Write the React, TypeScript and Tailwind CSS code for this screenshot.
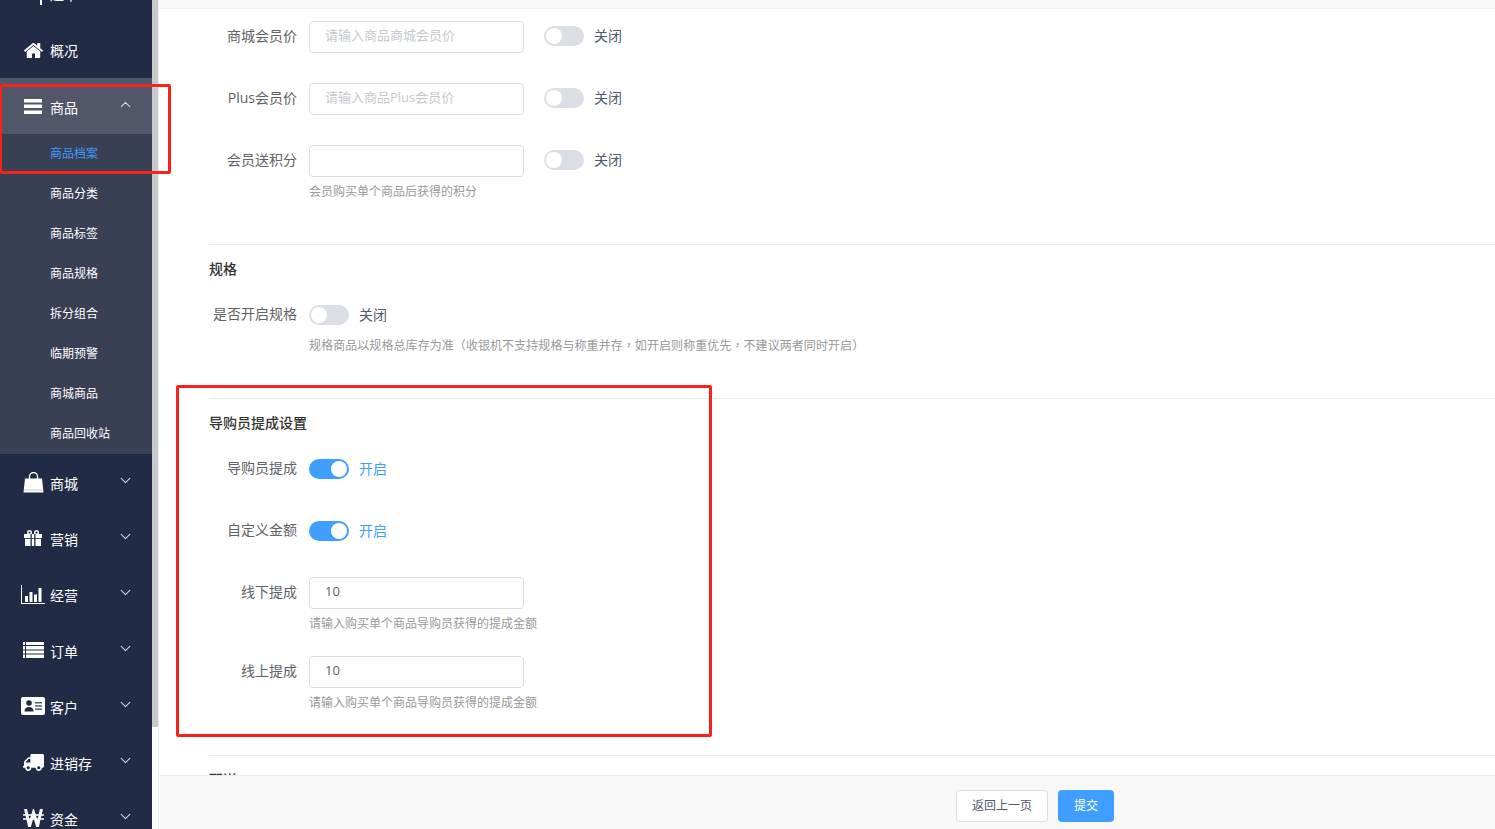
import { FaTruck } from "react-icons/fa";
import { ChevronDown, ChevronUp } from "lucide-react";
import type { ReactNode } from "react";

const font = "font-['Open_Sans','Noto_Sans_CJK_SC',sans-serif]";

const HomeIcon = () => (
  <svg width="21" height="21" viewBox="0 0 1792 1792" fill="currentColor">
    <path d="M1472 992v480q0 26-19 45t-45 19h-384v-384h-256v384h-384q-26 0-45-19t-19-45v-480q0-1 .5-3t.5-3l575-474 575 474q1 2 1 6zm223-69l-62 74q-8 9-21 11h-3q-13 0-21-7l-692-577-692 577q-12 8-24 7-13-2-21-11l-62-74q-8-10-7-23.500t11-21.500l719-599q32-26 76-26t76 26l244 204v-195q0-14 9-23t23-9h192q14 0 23 9t9 23v408l219 182q10 8 11 21.500t-7 23.500z" />
  </svg>
);

const BarsIcon = () => (
  <svg width="18" height="15" viewBox="0 0 18 15" fill="currentColor">
    <rect width="18" height="3.5" y="0" />
    <rect width="18" height="3.5" y="5.5" />
    <rect width="18" height="3.5" y="11.5" />
  </svg>
);

const BagIcon = () => (
  <svg width="21" height="21" viewBox="0 0 21 21" fill="none">
    <path d="M2 6.500h17l1.500 14H.5z" fill="currentColor" />
    <path d="M6.500 9V4.500a4 4 0 0 1 8 0V9" stroke="currentColor" strokeWidth="1.300" />
    <rect x="1" y="17.500" width="19" height="1" fill="#c9ccd4" />
  </svg>
);

const GiftIcon = () => (
  <svg width="18" height="16" viewBox="0 0 18 16" fill="none">
    <circle cx="5.500" cy="2.500" r="1.800" stroke="currentColor" strokeWidth="1.400" />
    <circle cx="12.500" cy="2.500" r="1.800" stroke="currentColor" strokeWidth="1.400" />
    <rect x="0" y="4" width="18" height="4" fill="currentColor" />
    <rect x="1" y="8.800" width="16" height="7.200" fill="currentColor" />
    <rect x="6.500" y="4" width="1.300" height="12" fill="#222b45" />
    <rect x="10.200" y="4" width="1.300" height="12" fill="#222b45" />
  </svg>
);

const ChartIcon = () => (
  <svg width="24" height="19" viewBox="0 0 24 19" fill="currentColor">
    <path d="M0 0h1v18h23v1H0z" />
    <rect x="4" y="11" width="3" height="6" />
    <rect x="8.500" y="7" width="3" height="10" />
    <rect x="13" y="9.500" width="3" height="7.500" />
    <rect x="17.500" y="3" width="3" height="14" />
  </svg>
);

const ListIcon = () => (
  <svg width="21" height="16" viewBox="0 0 21 16" fill="currentColor">
    <rect x="0" y="0" width="2" height="3" />
    <rect x="3" y="0" width="18" height="3" />
    <rect x="0" y="4" width="2" height="3.500" />
    <rect x="3" y="4" width="18" height="3.500" />
    <rect x="0" y="8.500" width="2" height="3" />
    <rect x="3" y="8.500" width="18" height="3" />
    <rect x="0" y="12.500" width="2" height="3.500" />
    <rect x="3" y="12.500" width="18" height="3.500" />
  </svg>
);

const CardIcon = () => (
  <svg width="24" height="18" viewBox="0 0 24 18">
    <rect width="24" height="18" rx="2" fill="currentColor" />
    <circle cx="8" cy="6" r="2.800" fill="#222b45" />
    <path d="M3.500 14.500c0-3 1.500-4.500 4.500-4.500s4.500 1.500 4.500 4.500z" fill="#222b45" />
    <rect x="14" y="5" width="7" height="1.500" fill="#555d70" />
    <rect x="14" y="8.200" width="7" height="1.500" fill="#555d70" />
    <rect x="14" y="11.400" width="7" height="1.500" fill="#555d70" />
  </svg>
);

const WonIcon = () => (
  <svg width="21" height="18" viewBox="0 0 21 18" fill="none" stroke="currentColor">
    <path d="M2.500 0l4 17 4-13.500 4 13.500 4-17" strokeWidth="3" />
    <path d="M0 6h21M0 10h21" strokeWidth="1.400" />
  </svg>
);

function NavItem({ icon, label, open }: { icon: ReactNode; label: string; open?: boolean }) {
  return (
    <div className={`flex h-14 shrink-0 items-center pl-[21px] pr-[18px] text-sm text-white ${open ? "bg-[#515669]" : ""}`}>
      <span className="flex w-6 shrink-0 justify-center text-white">{icon}</span>
      <span className="ml-[5px] flex-1 pt-[4px]">{label}</span>
      {open ? (
        <ChevronUp size={17} strokeWidth={1.5} className="mb-[3px] text-[#d5d7dd]" />
      ) : (
        <ChevronDown size={17} strokeWidth={1.5} className="mb-[3px] text-[#d5d7dd]" />
      )}
    </div>
  );
}

function SubItem({ label, active }: { label: string; active?: boolean }) {
  return (
    <div className={`flex h-10 shrink-0 items-center pl-[50px] text-xs ${active ? "text-[#3d9bff]" : "text-white"}`}>
      {label}
    </div>
  );
}

function Switch({ on }: { on?: boolean }) {
  return (
    <span className={`flex h-5 w-10 shrink-0 items-center rounded-full p-[2px] ${on ? "justify-end bg-[#409eff]" : "justify-start bg-[#dcdee6]"}`}>
      <span className="h-4 w-4 rounded-full bg-white" />
    </span>
  );
}

function SwitchText({ on }: { on?: boolean }) {
  return <span className={`ml-[10px] text-sm ${on ? "text-[#409eff]" : "text-[#515a6e]"}`}>{on ? "开启" : "关闭"}</span>;
}

function Input({ placeholder, value }: { placeholder?: string; value?: string }) {
  return (
    <div className="flex h-8 w-[215px] shrink-0 items-center rounded border border-[#dcdee2] bg-white px-[15px] pb-[2px] text-[13px]">
      {value ? <span className="text-[#606266]">{value}</span> : <span className="text-[#c5c8ce]">{placeholder}</span>}
    </div>
  );
}

function Row({ label, children, className = "" }: { label: string; children: ReactNode; className?: string }) {
  return (
    <div className={`flex h-8 items-center ${className}`}>
      <label className="mr-3 w-[88px] shrink-0 pb-[2px] text-right text-sm whitespace-nowrap text-[#606266]">{label}</label>
      {children}
    </div>
  );
}

function Help({ children, className = "" }: { children: ReactNode; className?: string }) {
  return <div className={`ml-[100px] text-xs leading-[18px] whitespace-nowrap text-[#999] ${className}`}>{children}</div>;
}

function SwitchGroup() {
  return (
    <span className="ml-5 flex items-center pb-[2px]">
      <Switch />
      <SwitchText />
    </span>
  );
}

export default function App() {
  return (
    <div className={`relative flex h-[829px] w-[1495px] overflow-hidden bg-white ${font}`}>
      <aside className="flex h-full w-[152px] shrink-0 flex-col overflow-hidden bg-[#222b45]">
        <div className="-mt-[34px] flex h-14 shrink-0 items-center pl-[21px] text-sm text-white">
          <span className="flex w-6 shrink-0 justify-end pt-[14px] pr-[2px]">
            <svg width="3" height="8" viewBox="0 0 3 8" fill="currentColor"><rect x="0" y="0" width="2" height="8" /></svg>
          </span>
          <span className="ml-[5px] pt-[2px]">超市</span>
        </div>
        <div className="flex h-14 shrink-0 items-center pl-[21px] text-sm text-white">
          <span className="flex w-6 justify-center"><HomeIcon /></span>
          <span className="ml-[5px] pt-[2px]">概况</span>
        </div>
        <NavItem icon={<BarsIcon />} label="商品" open />
        <div className="shrink-0 bg-[#394053]">
          <SubItem label="商品档案" active />
          <SubItem label="商品分类" />
          <SubItem label="商品标签" />
          <SubItem label="商品规格" />
          <SubItem label="拆分组合" />
          <SubItem label="临期预警" />
          <SubItem label="商城商品" />
          <SubItem label="商品回收站" />
        </div>
        <NavItem icon={<BagIcon />} label="商城" />
        <NavItem icon={<GiftIcon />} label="营销" />
        <NavItem icon={<ChartIcon />} label="经营" />
        <NavItem icon={<ListIcon />} label="订单" />
        <NavItem icon={<CardIcon />} label="客户" />
        <NavItem icon={<FaTruck size={21} className="-scale-x-100" />} label="进销存" />
        <NavItem icon={<WonIcon />} label="资金" />
      </aside>

      <div className="h-full w-[6px] shrink-0 bg-white">
        <div className="h-[727px] w-[6px] bg-[#c8c9cb]" />
      </div>

      <main className="flex h-full min-w-0 flex-1 flex-col border-l border-[#eeeeee]">
        <div className="h-[9px] shrink-0 border-b border-[#eeeeee] bg-[#f8f8f9]" />
        <div className="h-[766px] shrink-0 overflow-hidden pl-[50px]">
          <div className="pt-3">
            <Row label="商城会员价">
              <Input placeholder="请输入商品商城会员价" />
              <SwitchGroup />
            </Row>
            <Row label="Plus会员价" className="mt-[30px]">
              <Input placeholder="请输入商品Plus会员价" />
              <SwitchGroup />
            </Row>
            <Row label="会员送积分" className="mt-[30px]">
              <Input />
              <SwitchGroup />
            </Row>
            <Help className="mt-[6px]">会员购买单个商品后获得的积分</Help>
          </div>

          <div className="mt-[43px] border-t border-[#e8eaec]" />
          <h3 className="mt-[14px] text-sm leading-5 font-medium text-[#333]">规格</h3>
          <Row label="是否开启规格" className="mt-[20px]">
            <Switch />
            <SwitchText />
          </Row>
          <Help className="mt-[6px] font-['Open_Sans','Noto_Sans_CJK_TC',sans-serif] tracking-[0.07px]">规格商品以规格总库存为准（收银机不支持规格与称重并存，如开启则称重优先，不建议两者同时开启）</Help>

          <div className="mt-[43px] border-t border-[#e8eaec]" />
          <h3 className="mt-[14px] text-sm leading-5 font-medium text-[#333]">导购员提成设置</h3>
          <Row label="导购员提成" className="mt-[20px]">
            <Switch on />
            <SwitchText on />
          </Row>
          <Row label="自定义金额" className="mt-[30px]">
            <Switch on />
            <SwitchText on />
          </Row>
          <Row label="线下提成" className="mt-[30px]">
            <Input value="10" />
          </Row>
          <Help className="mt-[6px]">请输入购买单个商品导购员获得的提成金额</Help>
          <Row label="线上提成" className="mt-[23px]">
            <Input value="10" />
          </Row>
          <Help className="mt-[6px]">请输入购买单个商品导购员获得的提成金额</Help>

          <div className="mt-[43px] border-t border-[#e8eaec]" />
          <h3 className="mt-[14px] text-sm leading-5 font-medium text-[#333]">配送</h3>
        </div>
        <footer className="flex h-[54px] shrink-0 items-start justify-center gap-[10px] border-t border-[#e8eaec] bg-[#f8f8f9] pt-[14px] pl-[416px] text-xs">
          <button className="h-8 w-[92px] rounded border border-[#dcdee2] bg-white text-[#515a6e]">返回上一页</button>
          <button className="h-8 w-14 rounded bg-[#409eff] text-white">提交</button>
        </footer>
      </main>

      <div className="pointer-events-none absolute top-[84px] left-0 h-[90px] w-[171px] rounded-[2px] border-[3px] border-l-2 border-[#f5231b]" />
      <div className="pointer-events-none absolute top-[385px] left-[176px] h-[352px] w-[536px] rounded-[2px] border-[3px] border-[#f5231b]" />
    </div>
  );
}
